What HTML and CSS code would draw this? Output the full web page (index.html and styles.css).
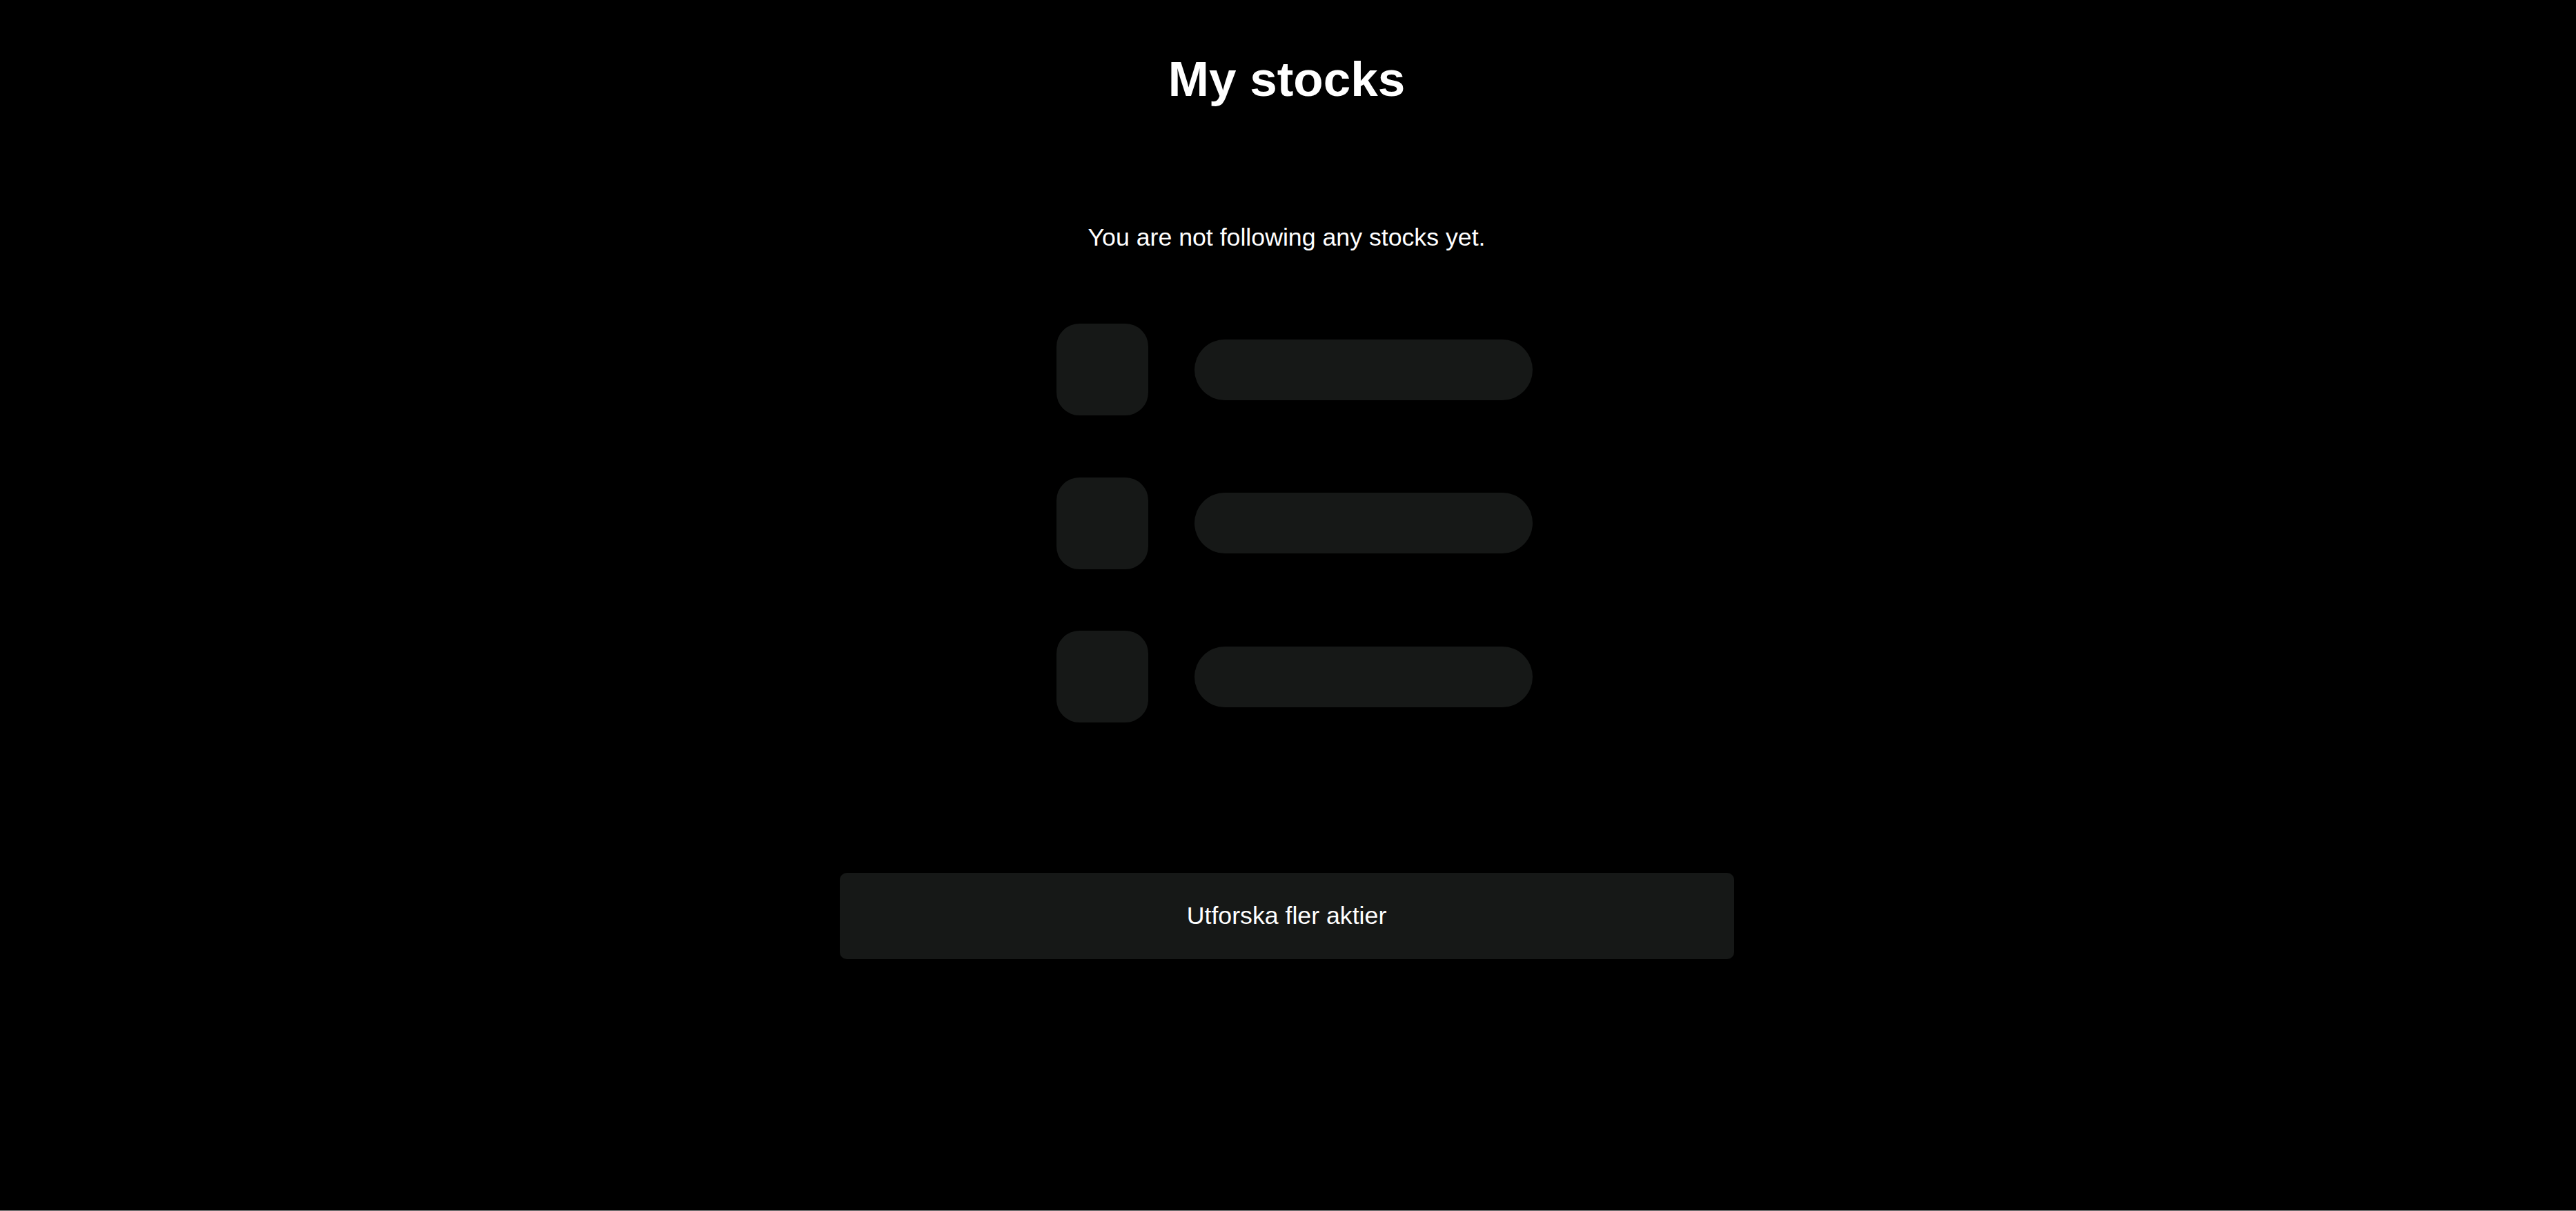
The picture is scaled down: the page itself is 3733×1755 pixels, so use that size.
FILE: index.html
```html
<!DOCTYPE html>
<html lang="en">
<head>
<meta charset="utf-8">
<title>My stocks</title>
<link rel="stylesheet" href="styles.css">
</head>
<body>
<main class="page">
  <h1 class="title">My stocks</h1>
  <p class="empty">You are not following any stocks yet.</p>
  <div class="placeholder">
    <div class="row"><div class="thumb"></div><div class="bar"></div></div>
    <div class="row"><div class="thumb"></div><div class="bar"></div></div>
    <div class="row"><div class="thumb"></div><div class="bar"></div></div>
  </div>
  <button class="explore" type="button">Utforska fler aktier</button>
</main>
</body>
</html>
```

FILE: styles.css
```css
html, body {
  margin: 0;
  padding: 0;
  background: #000;
}
body {
  font-family: "Liberation Sans", Arial, sans-serif;
  color: #fff;
  height: 1755px;
  box-sizing: border-box;
  border-bottom: 1px solid #8a8a8a;
  overflow: hidden;
}
.page {
  width: 3729px;
  display: flex;
  flex-direction: column;
  align-items: center;
  padding-top: 74px;
}
.title {
  margin: 0;
  font-size: 71px;
  font-weight: 700;
  line-height: normal;
}
.empty {
  margin: 169px 0 0;
  font-size: 35.7px;
  line-height: normal;
}
.placeholder {
  margin-top: 104px;
  width: 713px;
  padding-left: 23px;
  box-sizing: border-box;
  display: flex;
  flex-direction: column;
  gap: 89.5px;
}
.row {
  display: flex;
  align-items: center;
  gap: 67px;
}
.thumb {
  width: 133px;
  height: 133px;
  border-radius: 33px;
  background: #161817;
}
.bar {
  width: 490px;
  height: 88px;
  border-radius: 44px;
  background: #161817;
}
.explore {
  margin-top: 218px;
  width: 1296px;
  height: 125px;
  border: none;
  border-radius: 10px;
  background: #161817;
  color: #fff;
  font-family: "Liberation Sans", Arial, sans-serif;
  font-size: 35.7px;
  padding: 0;
}
```
